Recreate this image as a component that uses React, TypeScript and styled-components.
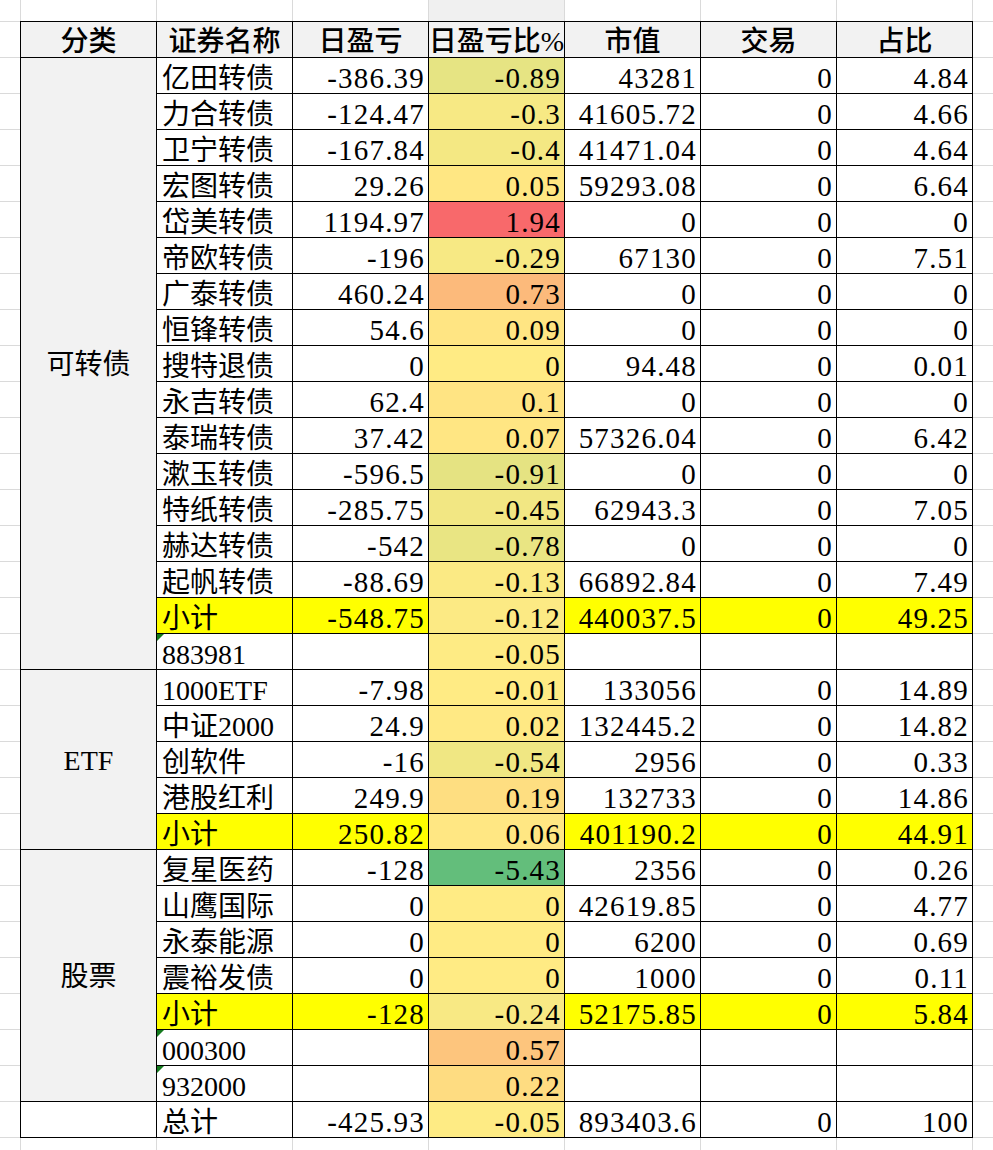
import styled, { createGlobalStyle } from "styled-components";
import { Fragment } from "react";

const GlobalStyle = createGlobalStyle`
	body {
		margin: 0;
		background: #fff;
	}
`;

const Sheet = styled.div`
	width: 993px;
	height: 1150px;
	box-sizing: border-box;
	padding: 21px 0 0 20px;
	overflow: hidden;
	background-color: #fff;
	background-image:
		linear-gradient(#dadada 1px, transparent 1px),
		linear-gradient(to right, #dadada 1px, transparent 1px),
		linear-gradient(#f0f0f0, #f0f0f0);
	background-size: 100% 36px, 136px 100%, 136px 21px;
	background-position: 0 21px, 20px 0, 428px 0;
	background-repeat: repeat, repeat, no-repeat;
	font-family: "Liberation Serif", "Noto Sans CJK SC", serif;
	color: #000;
`;

const Grid = styled.div`
	display: grid;
	grid-template-columns: repeat(7, 136px);
	grid-auto-rows: 36px;
	width: fit-content;
	border-top: 1px solid #000;
	border-left: 1px solid #000;
`;

const Cell = styled.div<{ $bg?: string; $mark?: boolean }>`
	position: relative;
	box-sizing: border-box;
	display: flex;
	align-items: flex-end;
	justify-content: flex-start;
	padding: 0 4px 0 5px;
	border-right: 1px solid #000;
	border-bottom: 1px solid #000;
	background: ${(p) => p.$bg ?? "#fff"};
	font-size: 28px;
	line-height: 1;
	white-space: nowrap;

	${(p) =>
		p.$mark &&
		`
		&::before {
			content: "";
			position: absolute;
			top: 0;
			left: 0;
			border-top: 7px solid #147a1e;
			border-right: 7px solid transparent;
		}
	`}
`;

const NumCell = styled(Cell)`
	justify-content: flex-end;
	padding-right: 3px;
	font-size: 29px;
	letter-spacing: 1.2px;
`;

const HeadCell = styled(Cell)`
	justify-content: center;
	padding: 0 0 1px;
	background: #f2f2f2;
	font-weight: 500;
`;

const GroupCell = styled(Cell)<{ $span: number; $plain?: boolean }>`
	grid-column: 1;
	grid-row: span ${(p) => p.$span};
	align-items: center;
	justify-content: center;
	padding: 2px 0 0;
	background: ${(p) => (p.$plain ? "#fff" : "#f2f2f2")};
`;

type Row = {
	name: string;
	pnl?: string;
	pct: number;
	mv?: string;
	trade?: string;
	share?: string;
	kind?: "sub" | "code";
};

const r = (name: string, pnl: string, pct: number, mv: string, share: string, kind?: "sub"): Row => ({
	name,
	pnl,
	pct,
	mv,
	trade: "0",
	share,
	kind,
});

const code = (name: string, pct: number): Row => ({ name, pct, kind: "code" });

const groups: { label: string; rows: Row[] }[] = [
	{
		label: "可转债",
		rows: [
			r("亿田转债", "-386.39", -0.89, "43281", "4.84"),
			r("力合转债", "-124.47", -0.3, "41605.72", "4.66"),
			r("卫宁转债", "-167.84", -0.4, "41471.04", "4.64"),
			r("宏图转债", "29.26", 0.05, "59293.08", "6.64"),
			r("岱美转债", "1194.97", 1.94, "0", "0"),
			r("帝欧转债", "-196", -0.29, "67130", "7.51"),
			r("广泰转债", "460.24", 0.73, "0", "0"),
			r("恒锋转债", "54.6", 0.09, "0", "0"),
			r("搜特退债", "0", 0, "94.48", "0.01"),
			r("永吉转债", "62.4", 0.1, "0", "0"),
			r("泰瑞转债", "37.42", 0.07, "57326.04", "6.42"),
			r("漱玉转债", "-596.5", -0.91, "0", "0"),
			r("特纸转债", "-285.75", -0.45, "62943.3", "7.05"),
			r("赫达转债", "-542", -0.78, "0", "0"),
			r("起帆转债", "-88.69", -0.13, "66892.84", "7.49"),
			r("小计", "-548.75", -0.12, "440037.5", "49.25", "sub"),
			code("883981", -0.05),
		],
	},
	{
		label: "ETF",
		rows: [
			r("1000ETF", "-7.98", -0.01, "133056", "14.89"),
			r("中证2000", "24.9", 0.02, "132445.2", "14.82"),
			r("创软件", "-16", -0.54, "2956", "0.33"),
			r("港股红利", "249.9", 0.19, "132733", "14.86"),
			r("小计", "250.82", 0.06, "401190.2", "44.91", "sub"),
		],
	},
	{
		label: "股票",
		rows: [
			r("复星医药", "-128", -5.43, "2356", "0.26"),
			r("山鹰国际", "0", 0, "42619.85", "4.77"),
			r("永泰能源", "0", 0, "6200", "0.69"),
			r("震裕发债", "0", 0, "1000", "0.11"),
			r("小计", "-128", -0.24, "52175.85", "5.84", "sub"),
			code("000300", 0.57),
			code("932000", 0.22),
		],
	},
];

const total = r("总计", "-425.93", -0.05, "893403.6", "100");

const headers = ["分类", "证券名称", "日盈亏", "日盈亏比%", "市值", "交易", "占比"];

// three-colour scale, green (min) - yellow (median) - red (max), like the spreadsheet
const allPct = [...groups.flatMap((g) => g.rows.map((x) => x.pct)), total.pct].sort((a, b) => a - b);
const minPct = allPct[0];
const maxPct = allPct[allPct.length - 1];
const midPct = (allPct[(allPct.length - 1) >> 1] + allPct[allPct.length >> 1]) / 2;

const GREEN = [99, 190, 123];
const YELLOW = [255, 235, 132];
const RED = [248, 105, 107];

const mix = (a: number[], b: number[], t: number) =>
	`rgb(${a.map((c, i) => Math.round(c + (b[i] - c) * t)).join(",")})`;

const scale = (v: number) =>
	v <= midPct
		? mix(GREEN, YELLOW, (v - minPct) / (midPct - minPct))
		: mix(YELLOW, RED, (v - midPct) / (maxPct - midPct));

const SUB_BG = "#ffff00";

const DataRow = ({ row }: { row: Row }) => {
	const bg = row.kind === "sub" ? SUB_BG : undefined;
	return (
		<>
			<Cell $bg={bg} $mark={row.kind === "code"}>{row.name}</Cell>
			<NumCell $bg={bg}>{row.pnl}</NumCell>
			<NumCell $bg={scale(row.pct)}>{String(row.pct)}</NumCell>
			<NumCell $bg={bg}>{row.mv}</NumCell>
			<NumCell $bg={bg}>{row.trade}</NumCell>
			<NumCell $bg={bg}>{row.share}</NumCell>
		</>
	);
};

const App = () => (
	<>
		<GlobalStyle />
		<Sheet>
			<Grid>
				{headers.map((h) => (
					<HeadCell key={h}>{h}</HeadCell>
				))}
				{groups.map((g) => (
					<Fragment key={g.label}>
						<GroupCell $span={g.rows.length}>{g.label}</GroupCell>
						{g.rows.map((row) => (
							<DataRow key={row.name} row={row} />
						))}
					</Fragment>
				))}
				<GroupCell $span={1} $plain />
				<DataRow row={total} />
			</Grid>
		</Sheet>
	</>
);

export default App;
